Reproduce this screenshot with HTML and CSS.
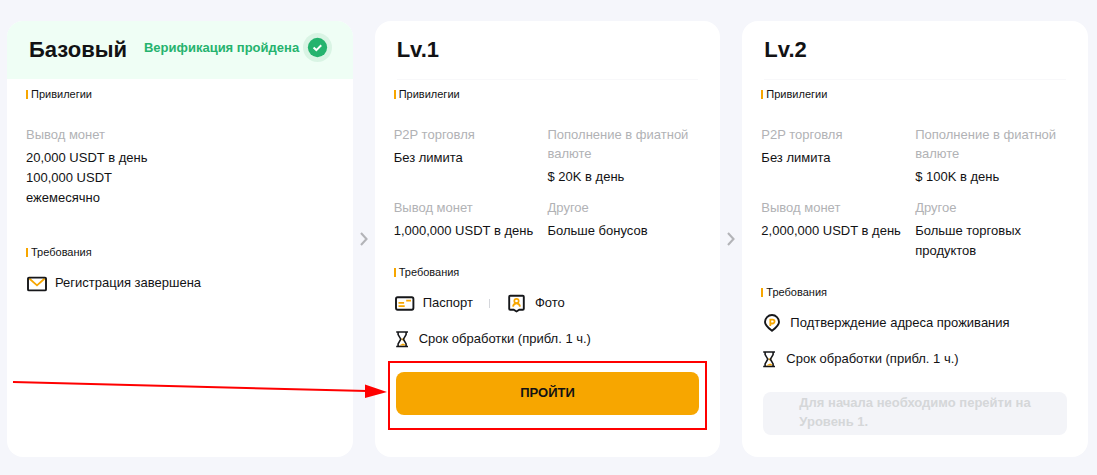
FILE: index.html
```html
<!DOCTYPE html>
<html lang="ru">
<head>
<meta charset="utf-8">
<title>Уровни верификации</title>
<meta name="viewport" content="width=device-width, initial-scale=1">
<link rel="stylesheet" href="styles.css">
</head>
<body>
<main class="levels">
  <section class="card">
    <header class="card-head card-head-done">
      <h2 class="card-title">Базовый</h2>
      <div class="status">
        <span>Верификация пройдена</span>
        <svg class="status-icon" viewBox="0 0 28 28" aria-hidden="true">
          <circle cx="14" cy="14" r="14" fill="#d9f4e4"/>
          <circle cx="14" cy="14" r="9.3" fill="#25b36e"/>
          <path d="M10.2 14l2.700 2.500 4.700-4.600" fill="none" stroke="#fff" stroke-width="1.900"/>
        </svg>
      </div>
    </header>
    <div class="card-body">
      <h3 class="section-title">Привилегии</h3>
      <dl class="perks">
        <div class="perk"><dt>Вывод монет</dt><dd>20,000 USDT в день 100,000 USDT ежемесячно</dd></div>
      </dl>
      <h3 class="section-title">Требования</h3>
      <ul class="needs">
        <li class="need-row">
          <span class="need">
            <svg class="icon" viewBox="0 0 22 22" fill="none" aria-hidden="true">
              <path d="M3.300 6.500l7.700 6.800 7.700-6.800" stroke="#f7a600" stroke-width="1.800"/>
              <rect x="2" y="5.600" width="18" height="12.800" rx="1" stroke="#16171a" stroke-width="1.900"/>
            </svg>
            Регистрация завершена
          </span>
        </li>
      </ul>
    </div>
  </section>

  <div class="step"><svg viewBox="0 0 8 14" fill="none" aria-hidden="true"><path d="M1 1l5.500 6L1 13" stroke="#b3b4b8" stroke-width="2.100"/></svg></div>

  <section class="card">
    <header class="card-head"><h2 class="card-title">Lv.1</h2></header>
    <div class="card-body">
      <h3 class="section-title">Привилегии</h3>
      <dl class="perks">
        <div class="perk"><dt>P2P торговля</dt><dd>Без лимита</dd></div>
        <div class="perk"><dt>Пополнение в фиатной валюте</dt><dd>$ 20K в день</dd></div>
        <div class="perk"><dt>Вывод монет</dt><dd>1,000,000 USDT в день</dd></div>
        <div class="perk"><dt>Другое</dt><dd>Больше бонусов</dd></div>
      </dl>
      <h3 class="section-title">Требования</h3>
      <ul class="needs">
        <li class="need-row">
          <span class="need">
            <svg class="icon" viewBox="0 0 22 22" fill="none" aria-hidden="true">
              <rect x="2" y="5.300" width="17.400" height="12.400" rx="1.600" stroke="#16171a" stroke-width="1.900"/>
              <path d="M4.500 10.800h5.600M4.500 14.200h6.200M12.200 8.700h4.800" stroke="#f7a600" stroke-width="1.700"/>
            </svg>
            Паспорт
          </span>
          <span class="divider"></span>
          <span class="need">
            <svg class="icon" viewBox="0 0 22 22" fill="none" aria-hidden="true">
              <path d="M4.200 3.700h12.600q1 0 1 1v12.100q0 1-1 1h-3.500l-2.800 1.700-2.800-1.700H4.200q-1 0-1-1V4.700q0-1 1-1z" stroke="#16171a" stroke-width="1.900"/>
              <path d="M7 14.700c.3-2.200 1.200-3.400 3.500-3.400s3.200 1.200 3.500 3.400" stroke="#f7a600" stroke-width="1.800"/>
              <circle cx="10.500" cy="9" r="2.200" stroke="#f7a600" stroke-width="1.700"/>
            </svg>
            Фото
          </span>
        </li>
        <li class="need-row">
          <span class="need">
            <svg class="icon icon-time" viewBox="0 0 18 22" fill="none" aria-hidden="true">
              <path d="M7 10.500h4L9 13zM5 17.500l4-2 4 2z" fill="#f7a600"/>
              <path d="M2.200 4h11.800M2.200 18.500h11.800" stroke="#16171a" stroke-width="1.600"/>
              <path d="M4.100 4v2.600l2.700 4.600-2.700 4.700v2.600M12.100 4v2.600l-2.700 4.600 2.700 4.700v2.600" stroke="#16171a" stroke-width="1.600"/>
            </svg>
            Срок обработки (прибл. 1 ч.)
          </span>
        </li>
      </ul>
      <div class="action">
        <button class="btn btn-primary" type="button">ПРОЙТИ</button>
        <span class="callout"></span>
        <svg class="pointer" viewBox="0 0 374 20" aria-hidden="true">
          <path d="M0 5l354 9" stroke="#f00" stroke-width="2"/>
          <path d="M352 7.500l22 7.500-22 6z" fill="#f00"/>
        </svg>
      </div>
    </div>
  </section>

  <div class="step"><svg viewBox="0 0 8 14" fill="none" aria-hidden="true"><path d="M1 1l5.500 6L1 13" stroke="#b3b4b8" stroke-width="2.100"/></svg></div>

  <section class="card">
    <header class="card-head"><h2 class="card-title">Lv.2</h2></header>
    <div class="card-body">
      <h3 class="section-title">Привилегии</h3>
      <dl class="perks">
        <div class="perk"><dt>P2P торговля</dt><dd>Без лимита</dd></div>
        <div class="perk"><dt>Пополнение в фиатной валюте</dt><dd>$ 100K в день</dd></div>
        <div class="perk"><dt>Вывод монет</dt><dd>2,000,000 USDT в день</dd></div>
        <div class="perk"><dt>Другое</dt><dd>Больше торговых продуктов</dd></div>
      </dl>
      <h3 class="section-title">Требования</h3>
      <ul class="needs">
        <li class="need-row">
          <span class="need">
            <svg class="icon" viewBox="0 0 22 22" fill="none" aria-hidden="true">
              <path d="M11 18.800C7.800 16.300 4 13.600 4 10a7 7 0 0 1 14 0c0 3.600-3.800 6.300-7 8.800z" stroke="#16171a" stroke-width="1.900"/>
              <path d="M9.300 14V7.600h2.300a1.900 1.900 0 0 1 0 3.900H9.300" stroke="#f7a600" stroke-width="1.800"/>
            </svg>
            Подтверждение адреса проживания
          </span>
        </li>
        <li class="need-row">
          <span class="need">
            <svg class="icon icon-time" viewBox="0 0 18 22" fill="none" aria-hidden="true">
              <path d="M7 10.500h4L9 13zM5 17.500l4-2 4 2z" fill="#f7a600"/>
              <path d="M2.200 4h11.800M2.200 18.500h11.800" stroke="#16171a" stroke-width="1.600"/>
              <path d="M4.100 4v2.600l2.700 4.600-2.700 4.700v2.600M12.100 4v2.600l-2.700 4.600 2.700 4.700v2.600" stroke="#16171a" stroke-width="1.600"/>
            </svg>
            Срок обработки (прибл. 1 ч.)
          </span>
        </li>
      </ul>
      <div class="action">
        <button class="btn btn-disabled" type="button" disabled>Для начала необходимо перейти на Уровень 1.</button>
      </div>
    </div>
  </section>
</main>
</body>
</html>
```
FILE: styles.css
```css
* {
  box-sizing: border-box;
}

body {
  margin: 0;
  background: #f5f6fb;
  color: #121214;
  font-family: "Liberation Sans", Arial, sans-serif;
  font-size: 13px;
  line-height: 20px;
}

h2, h3, dl, dd, ul {
  margin: 0;
  padding: 0;
}

.levels {
  display: flex;
  padding: 21px 9px 18px 7px;
}

.card {
  flex: 1 1 0;
  min-width: 0;
  background: #fff;
  border-radius: 16px;
}

.card-head {
  display: flex;
  align-items: center;
  gap: 17px;
  height: 59px;
  margin: 0 22px;
  border-bottom: 1px solid #f8f8fa;
}

.card-head-done {
  height: 58px;
  margin: 0 0 1px;
  padding: 0 22px;
  border-bottom: 0;
  border-radius: 16px 16px 0 0;
  background: #effef5;
}

.card-title {
  font-size: 22px;
  line-height: 28px;
}

.status {
  display: flex;
  flex: 1;
  align-items: center;
  gap: 4px;
  padding-bottom: 5px;
  color: #25b36e;
  font-weight: bold;
  white-space: nowrap;
}

.status-icon {
  flex: none;
  width: 29px;
  height: 29px;
}

.card-body {
  padding: 6px 19px 22px;
}

.section-title {
  display: flex;
  align-items: center;
  gap: 3px;
  font-size: 11px;
  font-weight: normal;
  line-height: 16px;
}

.section-title::before {
  width: 2px;
  height: 9px;
  background: #f7a600;
  content: "";
}

.perks {
  display: grid;
  grid-template-columns: 1fr 1fr;
  align-content: start;
  row-gap: 11px;
  min-height: 96px;
  margin: 23px 0;
}

.perk {
  padding-right: 12px;
}

.perk dt {
  margin-bottom: 4px;
  color: #b1b2b5;
  line-height: 19px;
}

.needs {
  display: grid;
  gap: 12px;
  margin: 11px 0 21px;
  list-style: none;
}

.need-row,
.need {
  display: flex;
  align-items: center;
}

.need {
  gap: 7px;
  height: 24px;
}

.icon {
  width: 22px;
  height: 22px;
}

.icon-time {
  width: 18px;
}

.divider {
  width: 1px;
  height: 9px;
  margin: 0 16px;
  background: #d5d7dc;
}

.action {
  position: relative;
  margin: 0 2px;
}

.btn {
  display: block;
  width: 100%;
  height: 43px;
  padding: 0 36px 3px;
  border: 0;
  border-radius: 8px;
  font: bold 13px/19px "Liberation Sans", Arial, sans-serif;
}

.btn-primary {
  background: #f7a600;
  color: #121214;
  cursor: pointer;
}

.btn-disabled {
  background: #f3f4f8;
  color: #d5d7d9;
  text-align: left;
}

.callout {
  position: absolute;
  inset: -11px -8px -15px;
  border: 2px solid #f00;
  pointer-events: none;
}

.pointer {
  position: absolute;
  top: 5px;
  right: calc(100% + 9px);
  width: 374px;
  height: 20px;
  overflow: visible;
  pointer-events: none;
}

.step {
  display: flex;
  flex: none;
  align-items: center;
  justify-content: center;
  width: 22px;
}

.step svg {
  width: 8px;
  height: 14px;
}
```
